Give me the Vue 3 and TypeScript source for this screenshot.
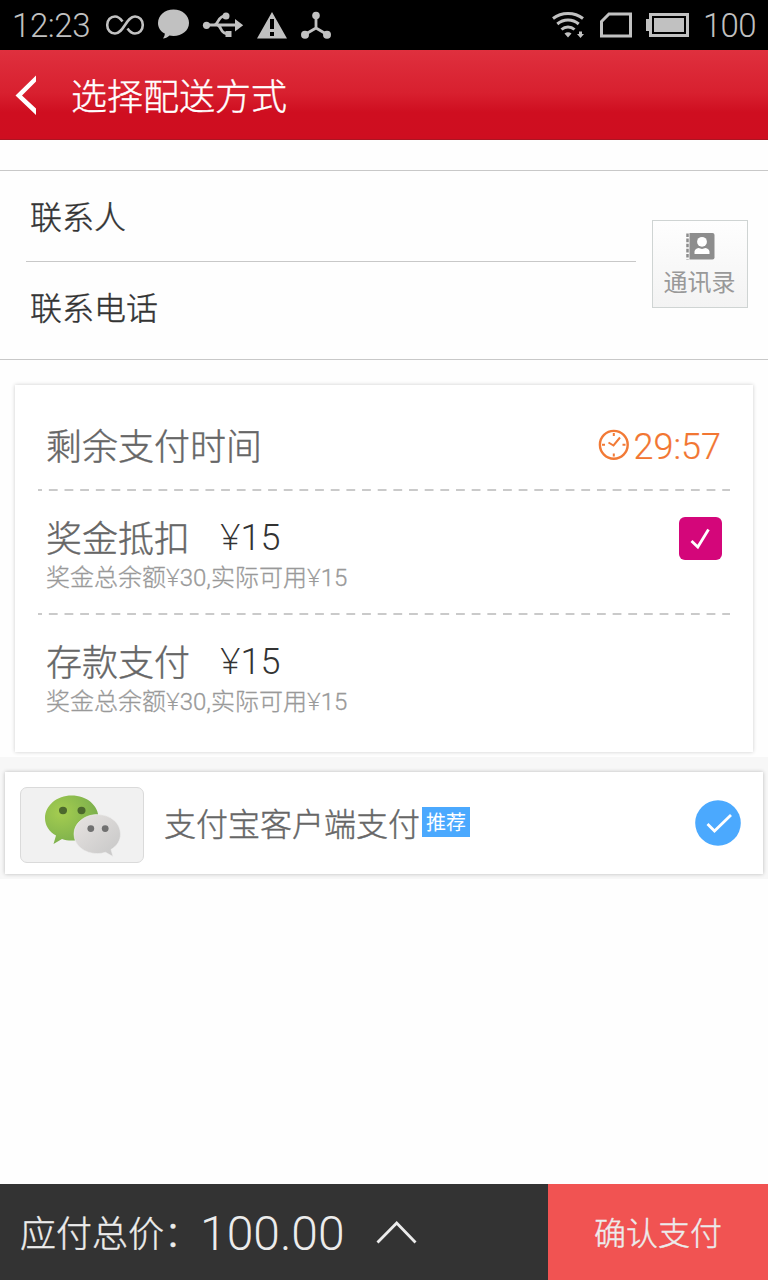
<script setup lang="ts">
import { ref } from 'vue'

interface PayRow {
  label: string
  amount: string
  note: string[]
  checkable: boolean
}

const fields: string[] = ['联系人', '联系电话']
const rows: PayRow[] = [
  { label: '奖金抵扣', amount: '15', note: ['奖金总余额', '30,实际可用', '15'], checkable: true },
  { label: '存款支付', amount: '15', note: ['奖金总余额', '30,实际可用', '15'], checkable: false },
]
const useBonus = ref(true)
</script>

<template>
  <div class="screen">
    <div class="status">
      <span class="clock">12:23</span>
      <svg class="ic" width="230" height="50" viewBox="104 0 230 50">
        <g fill="none" stroke="#c1c1c1">
          <path d="M122.500 21.500C120 18 117.500 16.500 115 16.500C110.500 16.500 107.200 20.300 107.200 25C107.200 29.700 110.500 33.500 115 33.500C124 33.500 126 16.500 135 16.500C139.500 16.500 142.800 20.300 142.800 25C142.800 29.700 139.500 33.500 135 33.500C132.500 33.500 130 32 127.500 28.500" stroke-width="2.600" />
          <path d="M206 25H236M214 25C219 25 217 15.500 227 15.500M217 25C222 25 219 34 229 34" stroke-width="2.800" />
          <path d="M316 16V29M316 28L305 34.500M316 28L327 34.500" stroke-width="2.800" />
        </g>
        <g fill="#c1c1c1">
          <path d="M173.500 9.500C182.500 9.500 189 15.500 189 23C189 30.500 182 36 173.500 36C172 36 170.500 35.800 169.500 35.500C167.500 37.500 165 38.500 163 38.500C164 37 164.800 35.500 164.800 33.500C160.500 31.500 158 27.500 158 23C158 15.500 164.500 9.500 173.500 9.500Z" />
          <circle cx="206.500" cy="25.300" r="3.600" />
          <circle cx="226" cy="16" r="3.500" />
          <path d="M235 19L243.200 25.200L235 31.500ZM225.500 31H231.500V37H225.500Z" />
          <path fill-rule="evenodd" d="M272 12L287 38.500H257ZM270 19V29H274V19ZM270 32V36H274V32Z" />
          <circle cx="316" cy="15.500" r="3.800" />
          <circle cx="305" cy="34.700" r="4" />
          <circle cx="327" cy="34.700" r="4" />
        </g>
      </svg>
      <svg class="ic right" width="144" height="50" viewBox="550 0 144 50">
        <g fill="none" stroke="#c1c1c1" stroke-width="3">
          <path d="M553 18.500C561.500 11.800 574.500 11.800 583 18.500" />
          <path d="M557.300 24C563.500 18.700 572.500 18.700 578.700 24" />
          <path d="M561.500 29.500C565.300 26 570.700 26 574.500 29.500" />
          <path d="M601.500 21.500L609 14H630.500V36H601.500Z" />
          <path d="M650.500 14.500H687.500V35.500H650.500Z" />
        </g>
        <g fill="#c1c1c1">
          <path d="M564.500 33.500Q568 31 571.500 33.500L568 37.500ZM579 31.500H582V34H584L580.500 38L577 34H579ZM654 18H684V32H654ZM646 19H649V31H646Z" />
        </g>
      </svg>
      <span class="level">100</span>
    </div>

    <header class="bar">
      <svg class="back" width="24" height="42" viewBox="14 74 24 42">
        <path d="M36 75.500V81.500L22 95.500L36 108.500V115L15.500 95.500Z" fill="#fff" />
      </svg>
      <h1 class="cjk">选择配送方式</h1>
    </header>

    <section class="contact">
      <div class="fields">
        <div v-for="f in fields" :key="f" class="field cjk">{{ f }}</div>
      </div>
      <button class="book">
        <svg width="30" height="28" viewBox="684 232 30 28">
          <path d="M688.500 233H711.500Q713.500 233 713.500 235V257.500Q713.500 259.500 711.500 259.500H688.500Z" fill="#8d8d8d" />
          <path d="M686.500 233.500V259.500" stroke="#8d8d8d" stroke-width="2.500" stroke-dasharray="3.600 1.500" />
          <circle cx="701" cy="241.800" r="4.900" fill="#fff" />
          <path d="M693.500 254V251.500Q694 248.800 697.500 248L701 249L704.500 248Q708 248.800 708.500 251.500V254Z" fill="#fff" />
        </svg>
        <span>通讯录</span>
      </button>
    </section>

    <section class="card">
      <div class="time">
        <span class="label cjk">剩余支付时间</span>
        <svg width="32" height="32" viewBox="598 429 32 32" fill="none" stroke="#f27a36">
          <circle cx="613.800" cy="444.800" r="13.900" stroke-width="2.400" />
          <path d="M608.500 442.500L613.500 445.500L620 437.500" stroke-width="2" />
          <path d="M613.800 433V436M613.800 453.500V456.500M602 444.800H605M622.500 444.800H625.500" stroke-width="2" />
        </svg>
        <span class="count">29:57</span>
      </div>
      <template v-for="r in rows" :key="r.label">
        <svg class="dash" width="692" height="2" viewBox="0 0 692 2">
          <path d="M0 1H692" stroke="#cacaca" stroke-width="2" stroke-dasharray="8.800 6.860" stroke-dashoffset="4.800" />
        </svg>
        <div class="row">
          <div>
            <div class="main"><span class="label cjk">{{ r.label }}</span><span class="amount"><span class="yen">¥</span>{{ r.amount }}</span></div>
            <div class="note"><template v-for="(part, i) in r.note" :key="i"><span v-if="i > 0" class="yen">¥</span>{{ part }}</template></div>
          </div>
          <button v-if="r.checkable" class="check" @click="useBonus = !useBonus">
            <svg v-if="useBonus" width="43" height="43" viewBox="679 517 43 43">
              <path d="M691.500 541L697.800 547L708.500 529.500" fill="none" stroke="#fff" stroke-width="2.800" />
            </svg>
          </button>
        </div>
      </template>
    </section>

    <section class="strip">
      <div class="method">
        <div class="logo">
          <svg width="78" height="64" viewBox="44 794 78 64">
            <defs>
              <radialGradient id="green" cx=".3" cy=".35" r=".75">
                <stop offset="0" stop-color="#a5cd50" />
                <stop offset="1" stop-color="#78ad4c" />
              </radialGradient>
              <linearGradient id="grey" x1="0" y1="0" x2="1" y2="1">
                <stop offset="0" stop-color="#e8e4e2" />
                <stop offset="1" stop-color="#c6c6c6" />
              </linearGradient>
            </defs>
            <path d="M71.500 795.500C87 795.500 98.500 805.500 98.500 818C98.500 831 87 840.500 71.500 840.500C68 840.500 65 840 62 839L53.500 844L56 835.500C49 831.500 45 825.500 45 818C45 805.500 57 795.500 71.500 795.500Z" fill="url(#green)" />
            <path d="M97.500 814.500C110.500 814.500 120.500 823 120.500 834C120.500 840.500 117 846 111 849.500L113 856.500L105.500 852.300C103 853.200 100 853.600 97.500 853.600C84.500 853.600 74 845.500 74 834C74 823 84.500 814.500 97.500 814.500Z" fill="url(#grey)" stroke="#efefef" stroke-width=".6" />
            <g fill="#4c682d"><ellipse cx="63" cy="810.500" rx="4" ry="3.700" /><ellipse cx="81.500" cy="810.500" rx="4" ry="3.700" /></g>
            <g fill="#707070"><circle cx="90.800" cy="828.600" r="3.400" /><circle cx="105.200" cy="828.600" r="3.400" /></g>
          </svg>
        </div>
        <span class="name cjk">支付宝客户端支付</span>
        <span class="tag">推荐</span>
        <svg class="on" width="46" height="46" viewBox="695 800 46 46">
          <circle cx="718" cy="823" r="22.800" fill="#4ba9fe" />
          <path d="M707.500 824L714.500 831L731 815" fill="none" stroke="#fff" stroke-width="2.800" />
        </svg>
      </div>
    </section>

    <footer class="foot">
      <div class="total">
        <span class="cap cjk">应付总价：</span><span class="sum">100.00</span>
        <svg width="42" height="26" viewBox="376 1219 42 26">
          <path d="M377.500 1242.500L396.700 1223L415.500 1242.500" fill="none" stroke="#ececec" stroke-width="2.800" />
        </svg>
      </div>
      <button class="confirm cjk"><span>确认支付</span></button>
    </footer>
  </div>
</template>

<style>
body { margin: 0; }
</style>

<style scoped>
.screen {
  width: 768px;
  height: 1280px;
  display: flex;
  flex-direction: column;
  overflow: hidden;
  background: #fefefe;
  font-family: Roboto, "Noto Sans CJK SC", sans-serif;
  font-weight: 300;
}
.screen * { box-sizing: border-box; }
.cjk { -webkit-text-stroke: .4px currentColor; }
.yen { font-family: "Open Sans", "Noto Sans", sans-serif; line-height: 1; }
svg { display: block; flex: none; }
button { border: 0; padding: 0; margin: 0; font: inherit; color: inherit; background: none; }
.status {
  height: 50px;
  flex: none;
  display: flex;
  background: #000;
  color: #c1c1c1;
  font-size: 33px;
  line-height: 52px;
  letter-spacing: -.4px;
}
.clock { width: 92px; padding-left: 12px; margin-right: 12px; white-space: nowrap; }
.ic.right { margin-left: auto; }
.level { width: 74px; padding-left: 9px; letter-spacing: -.7px; }
.bar {
  height: 90px;
  flex: none;
  display: flex;
  background: linear-gradient(#df303e 0, #d8202f 48%, #cf0e20 70%, #ce0e20 100%);
  border-bottom: 1px solid #ab1522;
  color: #fff;
}
.back { margin: 24px 0 0 14px; }
h1 { margin: 0 0 0 33px; font-size: 36px; font-weight: 300; line-height: 96px; }
.contact {
  height: 190px;
  margin-top: 30px;
  flex: none;
  display: flex;
  border-top: 1px solid #c8c8c8;
  border-bottom: 1px solid #c8c8c8;
  color: #333;
}
.fields { width: 610px; margin-left: 26px; }
.field { height: 91px; padding-left: 4px; font-size: 32px; line-height: 95px; }
.field:first-child { border-bottom: 1px solid #c8c8c8; }
.book {
  width: 96px;
  height: 88px;
  margin: 49px 0 0 16px;
  display: flex;
  flex-direction: column;
  align-items: center;
  padding: 11px 1px 0 0;
  border: 1px solid #cfd4d3;
  background: linear-gradient(#fefefe, #f3f3f3);
  color: #999;
  font-size: 24px;
  font-weight: 400;
  line-height: 46px;
}
.card {
  width: 738px;
  height: 367px;
  margin: 25px 0 0 15px;
  flex: none;
  background: #fff;
  box-shadow: 0 0 4px rgba(0, 0, 0, .2);
}
.time { height: 104px; display: flex; padding: 0 32px 0 31px; }
.time svg { margin: 44px 4px 0 auto; }
.label { font-size: 36px; color: #666; }
.time .label { line-height: 126px; }
.count { font-size: 36px; line-height: 124px; color: #f27632; -webkit-text-stroke: .2px currentColor; }
.dash { margin-left: 23px; }
.row { height: 122px; display: flex; justify-content: space-between; padding: 0 31px; }
.main { height: 73px; display: flex; font-size: 36px; line-height: 95px; }
.main .label { line-height: 98px; }
.amount { margin-left: 30px; color: #333; }
.note { font-size: 24px; line-height: 28px; color: #999; -webkit-text-stroke: .3px currentColor; }
.check { width: 43px; height: 43px; margin-top: 26px; border-radius: 6px; background: #d4067a; }
.strip { height: 122px; margin-top: 5px; flex: none; padding: 15px 5px 0; background: #f7f7f7; }
.method {
  height: 102px;
  display: flex;
  background: #fff;
  box-shadow: 0 0 4px rgba(0, 0, 0, .24);
}
.logo {
  width: 124px;
  height: 76px;
  margin: 15px 20px 0 15px;
  padding: 6px 0 0 23px;
  border: 1px solid #dadada;
  border-radius: 7px;
  background: #f1f1f1;
}
.name { font-size: 32px; line-height: 106px; color: #666; }
.tag {
  width: 48px;
  height: 30px;
  margin: 35px 0 0 2px;
  background: #4ba9fe;
  color: #fff;
  font-size: 20px;
  font-weight: 400;
  line-height: 33px;
  text-align: center;
}
.on { margin: 28px 22px 0 auto; }
.foot { height: 96px; margin-top: auto; flex: none; display: flex; color: #ececec; }
.total { width: 548px; display: flex; padding-left: 20px; background: #333; line-height: 99px; }
.cap { width: 180px; font-size: 36px; line-height: 102px; }
.sum { width: 176px; font-size: 48px; }
.total svg { margin-top: 35px; }
.confirm { width: 220px; background: #f15352; font-size: 32px; line-height: 96px; padding-top: 2px; }
</style>
